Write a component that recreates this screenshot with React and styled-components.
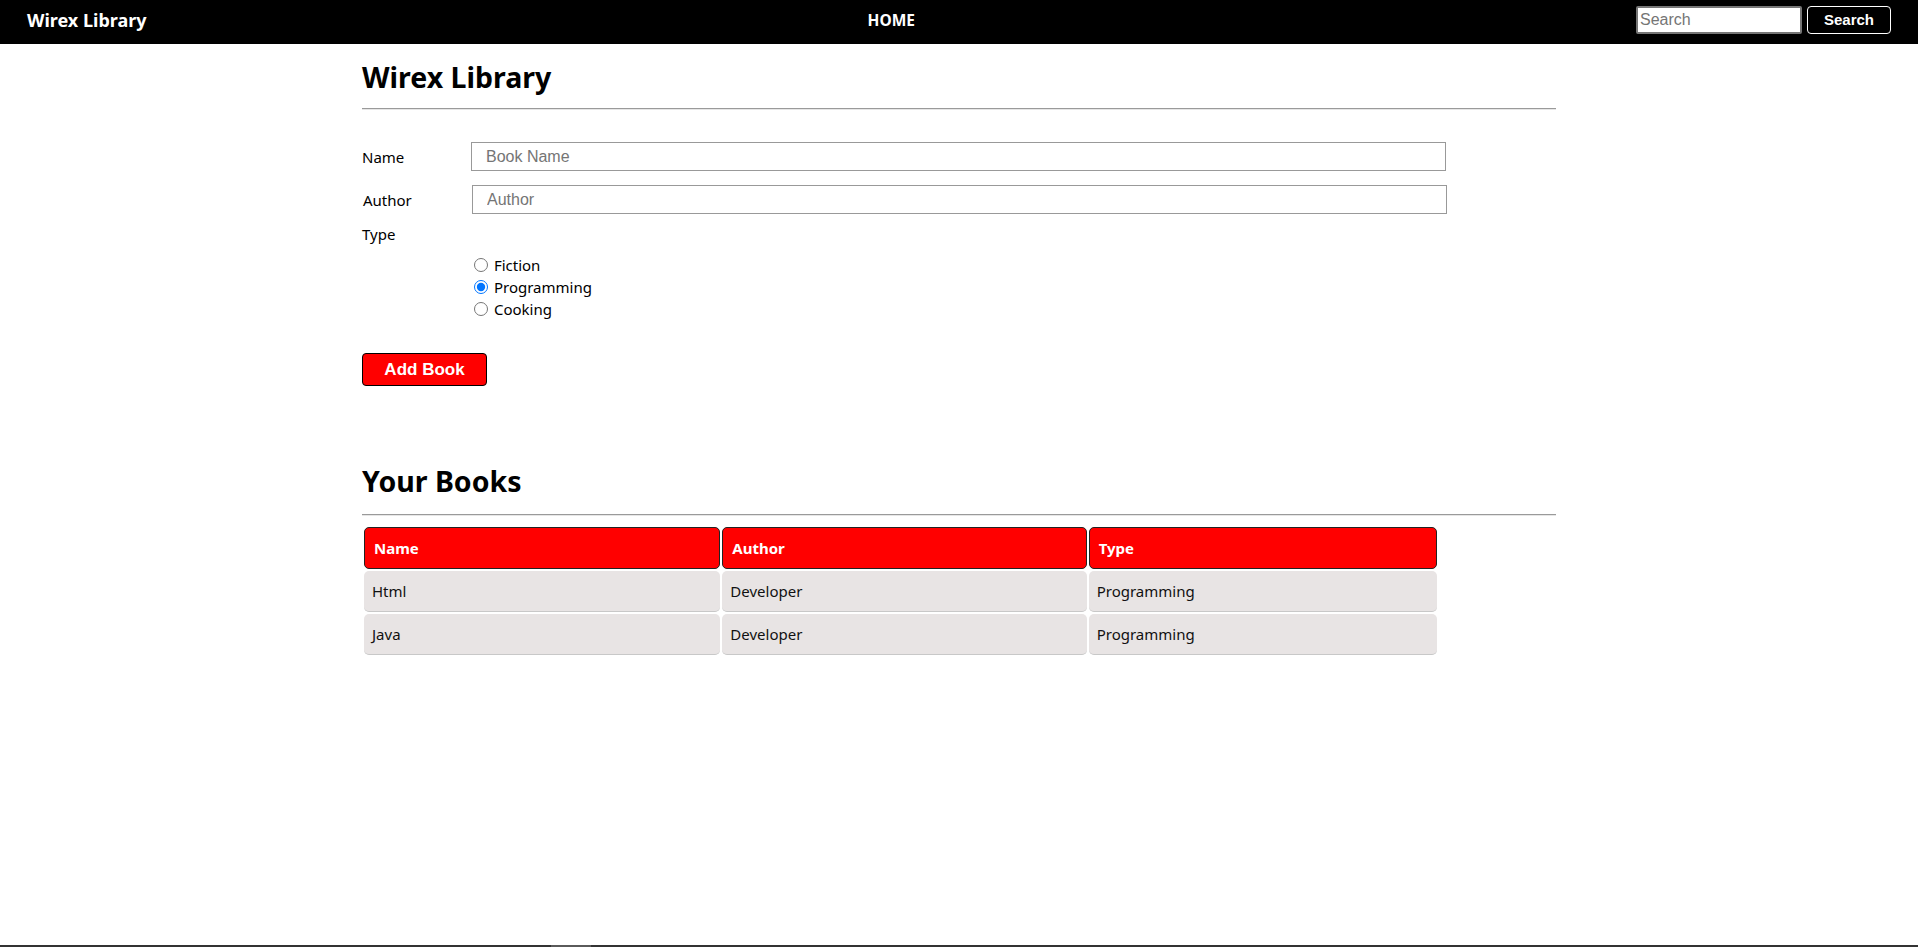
import React, { useState } from 'react';
import styled, { createGlobalStyle } from 'styled-components';

const GlobalStyle = createGlobalStyle`
  body {
    margin: 0;
    background: #fff;
    font-family: "Noto Sans", "Open Sans", sans-serif;
    color: #000;
  }
`;

const books = [
  { name: 'Html', author: 'Developer', type: 'Programming' },
  { name: 'Java', author: 'Developer', type: 'Programming' },
];

function Navbar() {
  return (
    <Nav>
      <Brand>Wirex Library</Brand>
      <NavLink href="#">HOME</NavLink>
      <SearchForm onSubmit={(e) => e.preventDefault()}>
        <SearchInput type="search" placeholder="Search" />
        <SearchButton type="submit">Search</SearchButton>
      </SearchForm>
    </Nav>
  );
}

function App() {
  const [type, setType] = useState('Programming');

  return (
    <>
      <GlobalStyle />
      <Navbar />
      <Container>
        <Title>Wirex Library</Title>
        <Rule />
        <Form onSubmit={(e) => e.preventDefault()}>
          <Field>
            <Label htmlFor="bookName">Name</Label>
            <TextInput id="bookName" placeholder="Book Name" />
          </Field>
          <Field shift>
            <Label htmlFor="author">Author</Label>
            <TextInput id="author" placeholder="Author" />
          </Field>
          <Field compact>
            <Label>Type</Label>
          </Field>
          <RadioGroup>
            {['Fiction', 'Programming', 'Cooking'].map((t) => (
              <RadioRow key={t}>
                <input
                  type="radio"
                  name="type"
                  value={t}
                  checked={type === t}
                  onChange={() => setType(t)}
                />{' '}
                {t}
              </RadioRow>
            ))}
          </RadioGroup>
          <AddButton type="submit">Add Book</AddButton>
        </Form>

        <SubTitle>Your Books</SubTitle>
        <Rule lower />
        <Table>
          <thead>
            <tr>
              <Th width={356}>Name</Th>
              <Th width={364}>Author</Th>
              <Th width={348}>Type</Th>
            </tr>
          </thead>
          <tbody>
            {books.map((b) => (
              <tr key={b.name}>
                <Td>{b.name}</Td>
                <Td>{b.author}</Td>
                <Td>{b.type}</Td>
              </tr>
            ))}
          </tbody>
        </Table>
      </Container>
      <Scrollbar>
        <Thumb />
      </Scrollbar>
    </>
  );
}

const Nav = styled.nav`
  height: 44px;
  box-sizing: border-box;
  background: #000;
  display: flex;
  align-items: center;
  justify-content: space-between;
  padding: 0 27px 4px;
`;

const Brand = styled.span`
  color: #fff;
  font-weight: 700;
  font-size: 18px;
`;

const NavLink = styled.a`
  color: #fff;
  font-weight: 700;
  font-size: 15.5px;
  text-decoration: none;
`;

const SearchForm = styled.form`
  display: flex;
  gap: 5px;
  margin: 0;
`;

const SearchInput = styled.input`
  width: 166px;
  height: 28px;
  box-sizing: border-box;
  border: 2px solid #767676;
  border-radius: 2px;
  font-family: "Liberation Sans", Arial, sans-serif;
  font-size: 16px;
  padding: 0 2px;
  &::placeholder {
    color: #757575;
  }
`;

const SearchButton = styled.button`
  width: 84px;
  height: 28px;
  background: #000;
  color: #fff;
  border: 1px solid #fff;
  border-radius: 4px;
  font-family: "Liberation Sans", Arial, sans-serif;
  font-weight: 700;
  font-size: 15px;
  line-height: 1;
  padding: 0 0 2px;
  cursor: pointer;
`;

const Container = styled.main`
  width: 1194px;
  margin: 0 auto;
`;

const Title = styled.h1`
  font-size: 28.5px;
  font-weight: 700;
  margin: 13px 0 0;
  line-height: 40px;
`;

const SubTitle = styled(Title).attrs({ as: 'h2' })`
  margin-top: 75px;
`;

const Rule = styled.hr`
  margin: ${(p) => (p.lower ? '13px' : '11px')} 0 0;
  border: 0;
  border-top: 1px solid #9a9a9a;
  border-bottom: 1px solid #e6e6e6;
`;

const Form = styled.form`
  display: flex;
  flex-direction: column;
  align-items: flex-start;
  padding-top: 32px;
`;

const Field = styled.div`
  display: flex;
  align-items: center;
  width: 100%;
  margin-top: ${(p) => (p.compact ? '-4px' : '0')};
  margin-bottom: 14px;
  padding-left: ${(p) => (p.shift ? '1px' : '0')};
  box-sizing: border-box;
`;

const Label = styled.label`
  width: 109px;
  flex-shrink: 0;
  font-size: 15px;
`;

const TextInput = styled.input`
  width: 975px;
  height: 29px;
  box-sizing: border-box;
  border: 1px solid #999;
  padding: 0 14px;
  font-family: "Liberation Sans", Arial, sans-serif;
  font-size: 16px;
  &::placeholder {
    color: #757575;
  }
`;

const RadioGroup = styled.div`
  display: flex;
  flex-direction: column;
  padding-left: 107px;
  margin-top: -4px;
  font-size: 15px;
`;

const RadioRow = styled.label`
  line-height: 22px;
  input {
    width: 14px;
    height: 14px;
    margin: 3px 2px 0 5px;
    vertical-align: -1px;
  }
`;

const AddButton = styled.button`
  margin-top: 33px;
  width: 125px;
  height: 33px;
  background: #ff0000;
  color: #fff;
  border: 1px solid #000;
  border-radius: 4px;
  font-family: "Liberation Sans", Arial, sans-serif;
  font-weight: 700;
  font-size: 17px;
  cursor: pointer;
`;

const Table = styled.table`
  width: 1077px;
  table-layout: fixed;
  border-spacing: 2px;
  margin-top: 9px;
  font-size: 15px;
`;

const Th = styled.th`
  width: ${(p) => p.width}px;
  height: 42px;
  box-sizing: border-box;
  background: #ff0000;
  color: #fff;
  border: 1px solid #222;
  border-radius: 5px;
  text-align: left;
  padding: 0 9px;
  font-weight: 700;
`;

const Td = styled.td`
  height: 41px;
  box-sizing: border-box;
  background: #e8e4e4;
  border-radius: 5px;
  border-bottom: 1px solid #c8c8c8;
  padding: 0 8px;
  color: #111;
`;

const Scrollbar = styled.div`
  position: fixed;
  left: 0;
  right: 0;
  bottom: 0;
  height: 2px;
  background: #333;
`;

const Thumb = styled.div`
  position: absolute;
  left: 551px;
  top: 0;
  width: 40px;
  height: 2px;
  background: #5a5a5a;
`;

export default App;
